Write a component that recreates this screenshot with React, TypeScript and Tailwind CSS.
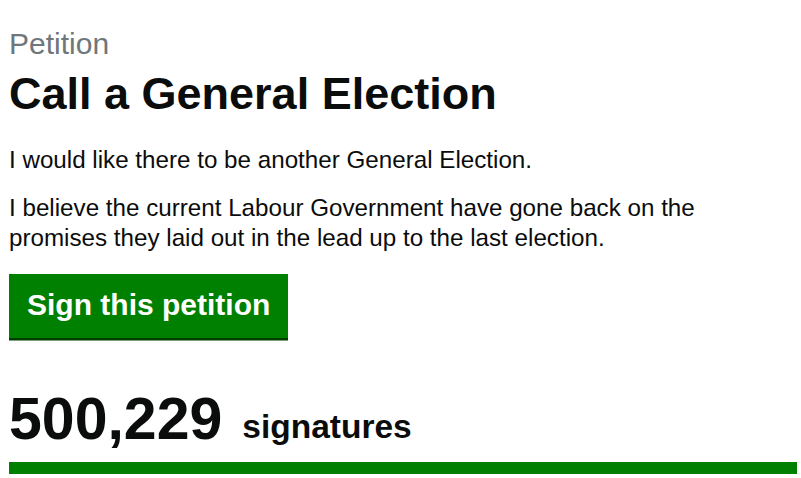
export default function App() {
  return (
    <div className="min-h-screen bg-white px-[9px] pt-[26px] font-['Liberation_Sans',Arial,sans-serif] text-[#0b0c0c]">
      {/* Heading */}
      <div className="text-[30px] leading-[36px] text-[#6f777b]">Petition</div>
      <h1 className="mt-[7px] text-[45px] font-bold leading-[50px]">Call a General Election</h1>

      {/* Body */}
      <p className="mt-[26px] text-[24.2px] leading-[30px]">I would like there to be another General Election.</p>
      <p className="mt-[18px] w-[720px] text-[24.2px] leading-[30px]">
        I believe the current Labour Government have gone back on the promises they laid out in the lead up to the last election.
      </p>

      <button className="mt-[21px] border-b-2 border-[#003b00] bg-[#008000] px-[18px] pb-[15px] pt-[13px] text-[30px] font-bold leading-[36px] text-white shadow-[0_1px_0_#7aa07a]">
        Sign this petition
      </button>

      {/* Signature count */}
      <div className="mt-[49px] flex items-end gap-[20px] font-bold">
        <span className="text-[59px] leading-[60px]">500,229</span>
        <span className="mb-[2px] text-[33.5px] leading-[40px]">signatures</span>
      </div>
      <div className="mt-[13px] h-[12px] w-[788px] bg-[#008000]" />
    </div>
  );
}
